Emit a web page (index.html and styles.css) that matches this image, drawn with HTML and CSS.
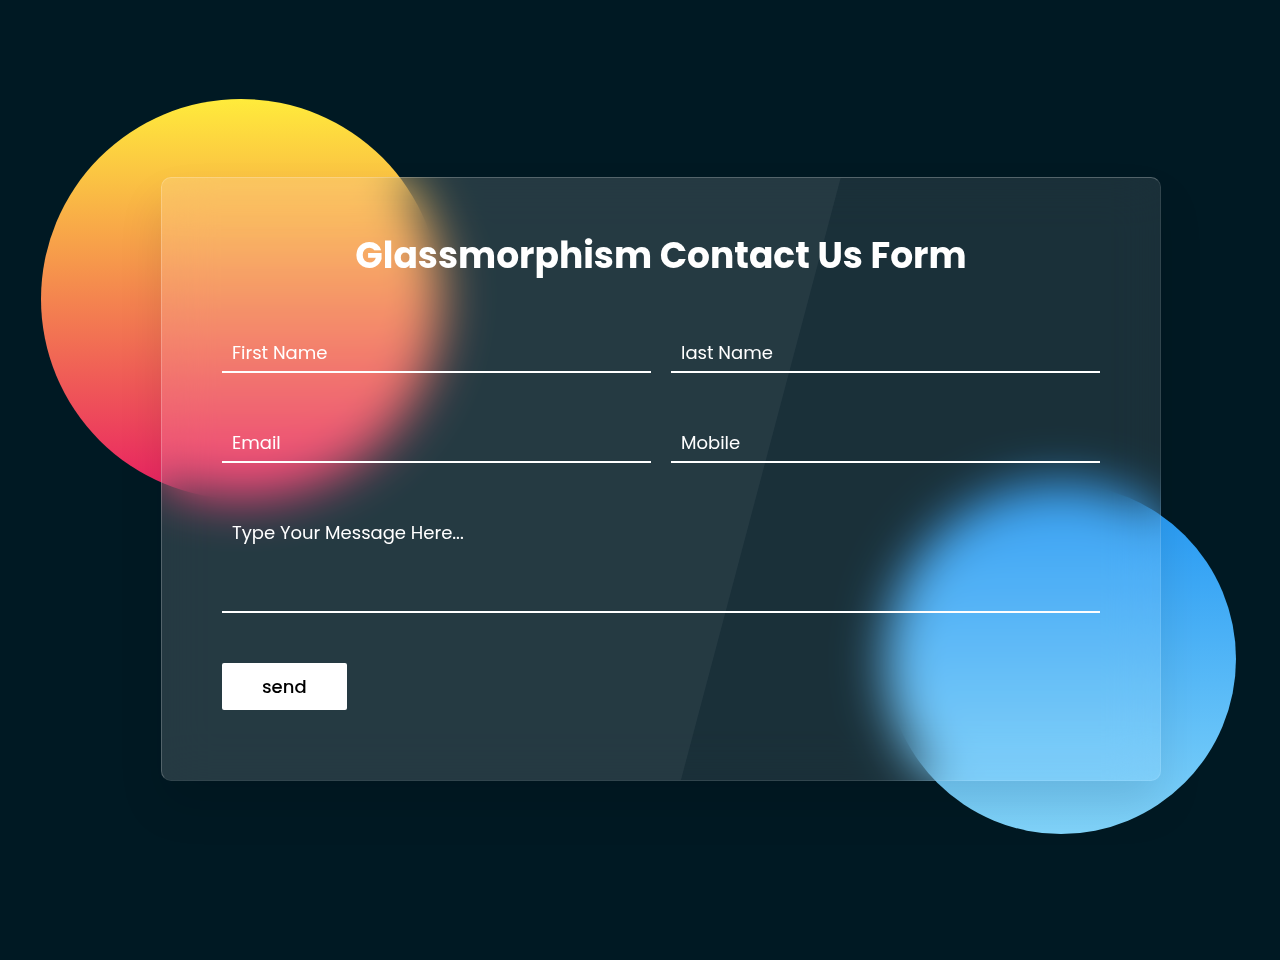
FILE: index.html
```html
<!DOCTYPE html>
<html lang="en">
<head>
<meta charset="utf-8">
<meta name="viewport" content="width=device-width, initial-scale=1">
<title>Glassmorphism Contact Us Form</title>
<link rel="stylesheet" href="styles.css">
</head>
<body>
<main class="page">
  <div class="container">
    <form class="form">
      <h1 class="title">Glassmorphism Contact Us Form</h1>
      <div class="row">
        <input class="field" type="text" placeholder="First Name" aria-label="First Name">
        <input class="field" type="text" placeholder="last Name" aria-label="Last Name">
      </div>
      <div class="row">
        <input class="field" type="email" placeholder="Email" aria-label="Email">
        <input class="field" type="tel" placeholder="Mobile" aria-label="Mobile">
      </div>
      <div class="row">
        <textarea class="field message" placeholder="Type Your Message Here..." aria-label="Message"></textarea>
      </div>
      <button class="send" type="button">send</button>
    </form>
  </div>
</main>
</body>
</html>
```
FILE: styles.css
```css
* {
  margin: 0;
  padding: 0;
  box-sizing: border-box;
  font-family: Poppins, "Open Sans", sans-serif;
}

.page {
  position: relative;
  display: flex;
  justify-content: center;
  align-items: center;
  min-height: 100vh;
  padding: 0 0 2px 42px;
  background: #001923;
  overflow: hidden;
}

/* Coloured discs behind the glass */
.page::before,
.page::after {
  content: "";
  position: absolute;
  border-radius: 50%;
}

.page::before {
  top: calc(50% - 381px);
  left: calc(50% - 599px);
  width: 400px;
  height: 400px;
  background: linear-gradient(#ffeb3b, #e91e63);
}

.page::after {
  top: calc(50% + 4px);
  left: calc(50% + 246px);
  width: 350px;
  height: 350px;
  background: linear-gradient(#2196f3, #81d4fa);
}

.container {
  position: relative;
  z-index: 1;
  width: 100%;
  max-width: 1000px;
  padding: 50px 60px 70px;
  background: rgba(255, 255, 255, 0.1);
  border: 1px solid rgba(255, 255, 255, 0.25);
  border-right-color: rgba(255, 255, 255, 0.1);
  border-bottom-color: rgba(255, 255, 255, 0.1);
  border-radius: 10px;
  box-shadow: 0 25px 45px rgba(0, 0, 0, 0.1);
  backdrop-filter: blur(25px);
  overflow: hidden;
}

/* Slanted highlight on the left part of the glass */
.container::before {
  content: "";
  position: absolute;
  inset: 0;
  background: rgba(255, 255, 255, 0.05);
  clip-path: polygon(0 0, 68% 0, 52% 100%, 0 100%);
  pointer-events: none;
}

.form {
  position: relative;
}

.title {
  margin-bottom: 50px;
  color: #fff;
  font-size: 36px;
  font-weight: 700;
  line-height: 55px;
  text-align: center;
}

.row {
  display: flex;
  gap: 20px;
  margin-bottom: 50px;
}

.field {
  flex: 1;
  min-width: 0;
  height: 40px;
  padding: 0 10px;
  background: transparent;
  border: 0;
  border-bottom: 2px solid #fff;
  outline: 0;
  color: #fff;
  font-size: 18px;
  font-weight: 400;
}

.field::placeholder {
  color: #fff;
  opacity: 1;
}

.message {
  display: block;
  height: 100px;
  padding: 6px 10px;
  line-height: 27px;
  resize: none;
}

.send {
  display: block;
  padding: 10px 40px;
  background: #fff;
  border: 0;
  border-radius: 2px;
  color: #000;
  font-size: 18px;
  font-weight: 500;
  line-height: 27px;
}
```
